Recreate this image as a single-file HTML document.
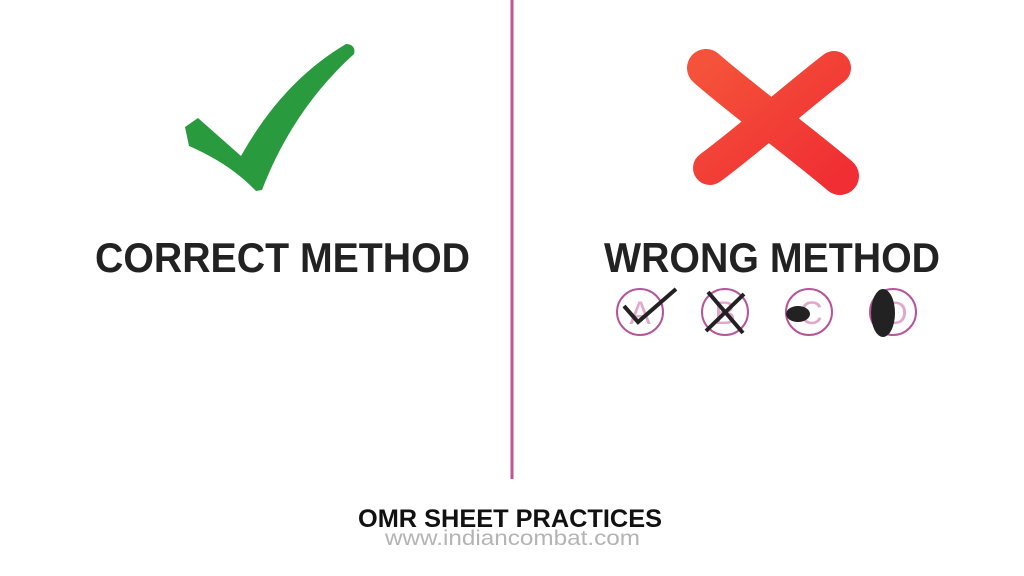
<!DOCTYPE html>
<html><head><meta charset="utf-8"><style>
html,body{margin:0;padding:0;background:#fff;}
svg{display:block}
</style></head><body>
<svg width="1024" height="576" viewBox="0 0 1024 576" xmlns="http://www.w3.org/2000/svg">
<defs>
<linearGradient id="rg" x1="0" y1="0" x2="1" y2="1">
<stop offset="0" stop-color="#f4523a"/><stop offset="1" stop-color="#f02e33"/>
</linearGradient>
</defs>
<rect width="1024" height="576" fill="#fff"/>
<line x1="512" y1="0" x2="512" y2="479" stroke="#c2529c" stroke-width="3"/>
<path d="M346 44 C351 44 356 47 354 54 C312 92 282 138 262 190 L256 191 C236 170 212 156 189 146 L185 127 L198 118 L241 156 C268 108 302 70 346 44 Z" fill="#2a9a3f"/>
<g stroke="url(#rg)" stroke-linecap="round" fill="none">
<path d="M706 68 C740 98 800 142 840 176" stroke-width="38"/>
<path d="M834 68 C795 98 742 145 710 168" stroke-width="34"/>
</g>
<text x="95" y="272" font-family="Liberation Sans, sans-serif" font-weight="bold" font-size="42" fill="#222" textLength="375" lengthAdjust="spacingAndGlyphs">CORRECT METHOD</text>
<text x="604" y="272" font-family="Liberation Sans, sans-serif" font-weight="bold" font-size="42" fill="#222" textLength="336" lengthAdjust="spacingAndGlyphs">WRONG METHOD</text>
<g fill="none" stroke="#b7559b" stroke-width="2">
<circle cx="640" cy="312" r="23"/><circle cx="725" cy="312" r="23"/>
<circle cx="809" cy="312" r="23"/><circle cx="893" cy="312" r="23"/>
</g>
<g font-family="Liberation Sans, sans-serif" font-size="32" fill="#e2a8cc" text-anchor="middle">
<text x="640" y="324">A</text><text x="725" y="324">B</text><text x="811" y="324">C</text><text x="896" y="324">D</text>
</g>
<path d="M624 306 L638 322 L676 289" stroke="#222" stroke-width="4" fill="none"/>
<path d="M708 292 L743 333 M744 294 L706 331" stroke="#222" stroke-width="4" fill="none"/>
<ellipse cx="798" cy="314" rx="12" ry="8" fill="#222"/>
<ellipse cx="883" cy="313" rx="12" ry="24" fill="#222"/>
<text x="358" y="527" font-family="Liberation Sans, sans-serif" font-weight="bold" font-size="25" fill="#111" textLength="304" lengthAdjust="spacingAndGlyphs">OMR SHEET PRACTICES</text>
<text x="385" y="545" font-family="Liberation Sans, sans-serif" font-size="21" fill="#b4b4b4" textLength="255" lengthAdjust="spacingAndGlyphs">www.indiancombat.com</text>
</svg>
</body></html>
